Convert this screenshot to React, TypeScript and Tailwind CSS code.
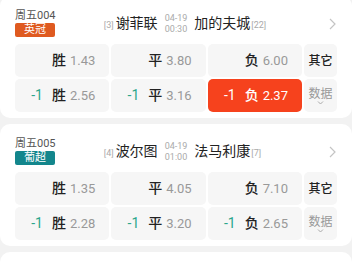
import type { ReactNode } from "react";

type Cell = { hc?: string; label: string; odds: string; hot?: boolean };

interface Match {
  no: string;
  league: string;
  leagueColor: string;
  home: string;
  homeRank: string;
  away: string;
  awayRank: string;
  date: string;
  time: string;
  rows: Cell[][];
}

const matches: Match[] = [
  {
    no: "周五004",
    league: "英冠",
    leagueColor: "bg-[#df5a20]",
    home: "谢菲联",
    homeRank: "[3]",
    away: "加的夫城",
    awayRank: "[22]",
    date: "04-19",
    time: "00:30",
    rows: [
      [
        { label: "胜", odds: "1.43" },
        { label: "平", odds: "3.80" },
        { label: "负", odds: "6.00" },
      ],
      [
        { hc: "-1", label: "胜", odds: "2.56" },
        { hc: "-1", label: "平", odds: "3.16" },
        { hc: "-1", label: "负", odds: "2.37", hot: true },
      ],
    ],
  },
  {
    no: "周五005",
    league: "葡超",
    leagueColor: "bg-[#13868c]",
    home: "波尔图",
    homeRank: "[4]",
    away: "法马利康",
    awayRank: "[7]",
    date: "04-19",
    time: "01:00",
    rows: [
      [
        { label: "胜", odds: "1.35" },
        { label: "平", odds: "4.05" },
        { label: "负", odds: "7.10" },
      ],
      [
        { hc: "-1", label: "胜", odds: "2.28" },
        { hc: "-1", label: "平", odds: "3.20" },
        { hc: "-1", label: "负", odds: "2.65" },
      ],
    ],
  },
];

function OddsCell({ cell }: { cell: Cell }) {
  const hot = cell.hot;
  return (
    <div
      className={`h-[33px] rounded-[5px] flex items-center justify-end pr-[14px] ${
        hot ? "bg-[#f6421d]" : "bg-[#f6f6f6]"
      }`}
    >
      {cell.hc && (
        <span className={`text-[14px] mr-[9px] ${hot ? "text-white" : "text-[#2ba68b]"}`}>{cell.hc}</span>
      )}
      <span className={`text-[14px] font-medium mr-[4px] ${hot ? "text-white" : "text-[#222]"}`}>{cell.label}</span>
      <span className={`text-[13px] ${hot ? "text-white" : "text-[#999]"}`}>{cell.odds}</span>
    </div>
  );
}

function SideCell({ children }: { children: ReactNode }) {
  return (
    <div className="h-[33px] rounded-[5px] bg-[#f6f6f6] flex flex-col items-center justify-center">{children}</div>
  );
}

function MatchCard({ m }: { m: Match }) {
  return (
    <div className="bg-white rounded-[10px] px-[15px] pb-[6px]">
      {/* header */}
      <div className="h-[48px] flex items-center pt-[7px]">
        <div className="w-[44px] flex flex-col items-start">
          <span className="text-[11px] leading-[12px] text-[#555]">{m.no}</span>
          <span
            className={`w-[40px] h-[14px] mt-[1px] rounded-[2px] text-center text-[11px] leading-[14px] text-white ${m.leagueColor}`}
          >
            {m.league}
          </span>
        </div>
        <div className="flex-1 grid grid-cols-[1fr_auto_1fr] items-center gap-[7px]">
          <div className="flex justify-end items-baseline">
            <span className="text-[9px] text-[#aaa] mr-[2px]">{m.homeRank}</span>
            <span className="text-[14px] text-[#222]">{m.home}</span>
          </div>
          <div className="flex flex-col items-center text-[9px] leading-[11px] text-[#aaa]">
            <span>{m.date}</span>
            <span>{m.time}</span>
          </div>
          <div className="flex items-baseline">
            <span className="text-[14px] text-[#222]">{m.away}</span>
            <span className="text-[9px] text-[#aaa] ml-[1px]">{m.awayRank}</span>
          </div>
        </div>
        <div className="w-[44px] flex justify-end pr-[1px]">
          <svg width="7" height="12" viewBox="0 0 7 12" fill="none" stroke="#c4c4c4" strokeWidth="1.2">
            <path d="M1 1l5 5-5 5" />
          </svg>
        </div>
      </div>

      {/* odds */}
      <div className="grid grid-cols-[1fr_1fr_1fr_33px] gap-[2px]">
        {m.rows[0].map((c, i) => (
          <OddsCell key={`a${i}`} cell={c} />
        ))}
        <SideCell>
          <span className="text-[12px] font-medium text-[#222]">其它</span>
        </SideCell>
        {m.rows[1].map((c, i) => (
          <OddsCell key={`b${i}`} cell={c} />
        ))}
        <SideCell>
          <span className="text-[12px] leading-[14px] text-[#999]">数据</span>
          <svg width="7" height="4" viewBox="0 0 7 4" fill="none" stroke="#aaa" strokeWidth="1">
            <path d="M1 0.5l2.5 2.5 2.5-2.5" />
          </svg>
        </SideCell>
      </div>
    </div>
  );
}

export default function App() {
  return (
    <div
      className="w-[352px] h-[264px] overflow-hidden bg-[#f2f2f2]"
      style={{ fontFamily: 'Roboto, "Noto Sans CJK SC", sans-serif' }}
    >
      <div className="-mt-[4px] flex flex-col gap-[6px]">
        {matches.map((m) => (
          <MatchCard key={m.no} m={m} />
        ))}
        <div className="bg-white rounded-[10px] h-[120px]" />
      </div>
    </div>
  );
}
